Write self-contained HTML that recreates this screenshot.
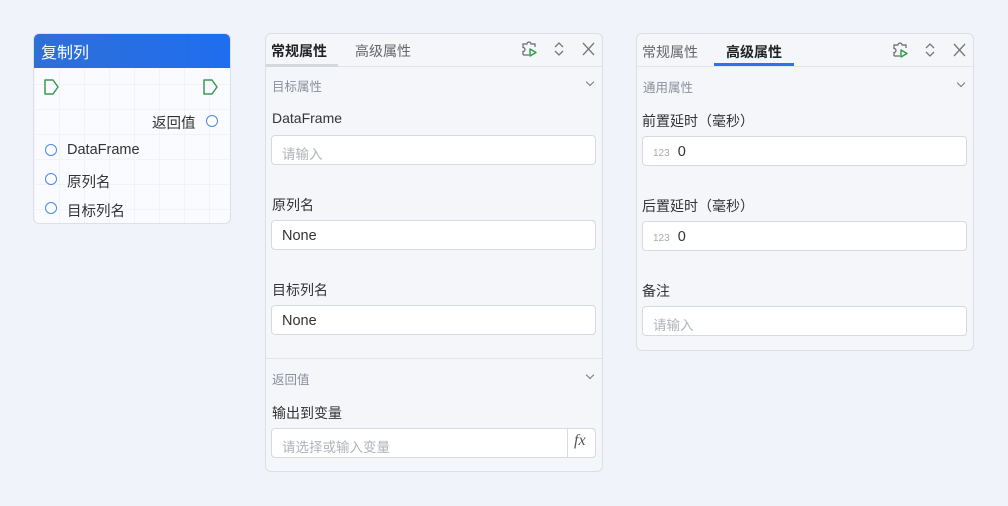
<!DOCTYPE html>
<html><head><meta charset="utf-8"><style>
*{box-sizing:border-box;margin:0;padding:0}
body{width:1008px;height:506px;background:#f0f3fa;font-family:"Liberation Sans","Noto Sans CJK SC",sans-serif;position:relative;overflow:hidden;color:#333}
.a{position:absolute;white-space:nowrap}
.node{position:absolute;left:33px;top:33px;width:198px;height:191px;border:1px solid #dde0e6;border-radius:6px;overflow:hidden;
background-color:#fafbfe;background-image:linear-gradient(#f1f3f8 1px,transparent 1px),linear-gradient(90deg,#f1f3f8 1px,transparent 1px);background-size:25px 25px}
.nh{position:absolute;left:0;top:0;width:100%;height:34px;background:linear-gradient(90deg,#2f6fd6,#1f6ef0);color:#fff;font-size:16px;padding:5px 7px}
.circ{position:absolute;width:12px;height:12px;border:1.3px solid #4a86e8;border-radius:50%;background:#fff}
.nt{position:absolute;font-size:14.5px;color:#333}
.panel{position:absolute;background:#f5f6f9;border:1px solid #dcdfe6;border-radius:6px}
.lbl{position:absolute;font-size:14px;color:#333}
.sec{position:absolute;font-size:12.5px;color:#8a8f99}
.inp{position:absolute;height:30px;background:#fff;border:1px solid #d5d9e0;border-radius:4px;font-size:14.5px;padding:7px 10px 5px;color:#333}
.ph{color:#b0b3ba;font-size:13.5px}
.chev{position:absolute;width:6px;height:6px;border-right:1.5px solid #777;border-bottom:1.5px solid #777;transform:rotate(45deg)}
</style></head><body>

<div class="node">
  <div class="nh">复制列</div>
  <svg class="a" style="left:9px;top:44px" width="18" height="18"><path d="M2 2h8l5 7-5 7H2z" fill="none" stroke="#3a9a4f" stroke-width="1.5" stroke-linejoin="round"/></svg>
  <svg class="a" style="left:168px;top:44px" width="18" height="18"><path d="M2 2h8l5 7-5 7H2z" fill="none" stroke="#3a9a4f" stroke-width="1.5" stroke-linejoin="round"/></svg>
  <div class="nt" style="left:118px;top:78px">返回值</div>
  <div class="circ" style="left:172px;top:81px"></div>
  <div class="circ" style="left:11px;top:110px"></div><div class="nt" style="left:33px;top:108px">DataFrame</div>
  <div class="circ" style="left:11px;top:139px"></div><div class="nt" style="left:33px;top:137px">原列名</div>
  <div class="circ" style="left:11px;top:168px"></div><div class="nt" style="left:33px;top:166px">目标列名</div>
</div>

<!-- panel 1 -->
<div class="panel" style="left:265px;top:33px;width:338px;height:439px">
  <div class="a" style="left:0;top:32px;width:336px;border-top:1px solid #e3e5ea"></div>
  <div class="a" style="left:0;top:30px;width:72px;height:3px;background:#d5d8de"></div>
  <div class="a" style="left:5px;top:7px;font-size:14px;font-weight:bold;color:#222">常规属性</div>
  <div class="a" style="left:89px;top:7px;font-size:14px;color:#666">高级属性</div>
  <div class="a" style="left:0;top:324px;width:336px;border-top:1px solid #e3e5ea"></div>
</div>
<!-- panel 2 -->
<div class="panel" style="left:636px;top:33px;width:338px;height:318px">
  <div class="a" style="left:0;top:32px;width:336px;border-top:1px solid #e3e5ea"></div>
  <div class="a" style="left:77px;top:29px;width:80px;height:3px;background:#2f6ff0"></div>
  <div class="a" style="left:5px;top:8px;font-size:14px;color:#666">常规属性</div>
  <div class="a" style="left:89px;top:8px;font-size:14px;font-weight:bold;color:#222">高级属性</div>
</div>

<!-- header icons -->
<svg class="a" style="left:520px;top:39px" width="80" height="20">
 <path d="M3 16V12.5a2 2 0 0 0 0-4V5h4a2 2 0 0 1 4 0h4v3" fill="none" stroke="#666" stroke-width="1.2"/><path d="M3 16h6" stroke="#666" stroke-width="1.2"/>
 <path d="M10 10v7l6-3.5z" fill="none" stroke="#2e9a4a" stroke-width="1.4" stroke-linejoin="round"/>
 <path d="M35 8l4-4 4 4M35 12l4 4 4-4" fill="none" stroke="#777" stroke-width="1.3"/>
 <path d="M63 4l11 12M74 4L63 16" stroke="#777" stroke-width="1.3"/>
</svg>
<svg class="a" style="left:891px;top:40px" width="80" height="20">
 <path d="M3 16V12.5a2 2 0 0 0 0-4V5h4a2 2 0 0 1 4 0h4v3" fill="none" stroke="#666" stroke-width="1.2"/><path d="M3 16h6" stroke="#666" stroke-width="1.2"/>
 <path d="M10 10v7l6-3.5z" fill="none" stroke="#2e9a4a" stroke-width="1.4" stroke-linejoin="round"/>
 <path d="M35 8l4-4 4 4M35 12l4 4 4-4" fill="none" stroke="#777" stroke-width="1.3"/>
 <path d="M63 4l11 12M74 4L63 16" stroke="#777" stroke-width="1.3"/>
</svg>

<!-- panel1 contents -->
<div class="sec" style="left:272px;top:76px">目标属性</div><div class="chev" style="left:587px;top:79px"></div>
<div class="lbl" style="left:272px;top:110px">DataFrame</div>
<div class="inp" style="left:271px;top:135px;width:325px"><span class="ph">请输入</span></div>
<div class="lbl" style="left:272px;top:195px">原列名</div>
<div class="inp" style="left:271px;top:220px;width:325px">None</div>
<div class="lbl" style="left:272px;top:280px">目标列名</div>
<div class="inp" style="left:271px;top:305px;width:325px">None</div>
<div class="sec" style="left:272px;top:369px">返回值</div><div class="chev" style="left:587px;top:372px"></div>
<div class="lbl" style="left:272px;top:403px">输出到变量</div>
<div class="inp" style="left:271px;top:428px;width:325px"><span class="ph">请选择或输入变量</span></div>
<div class="a" style="left:567px;top:429px;height:28px;border-left:1px solid #d5d9e0"></div>
<div class="a" style="left:574px;top:432px;font-family:'Liberation Serif',serif;font-style:italic;font-size:16px;color:#555">fx</div>

<!-- panel2 contents -->
<div class="sec" style="left:643px;top:77px">通用属性</div><div class="chev" style="left:958px;top:80px"></div>
<div class="lbl" style="left:642px;top:111px">前置延时（毫秒）</div>
<div class="inp" style="left:642px;top:136px;width:325px"><span style="font-size:10px;color:#aaa;margin-right:8px">123</span>0</div>
<div class="lbl" style="left:642px;top:196px">后置延时（毫秒）</div>
<div class="inp" style="left:642px;top:221px;width:325px"><span style="font-size:10px;color:#aaa;margin-right:8px">123</span>0</div>
<div class="lbl" style="left:642px;top:281px">备注</div>
<div class="inp" style="left:642px;top:306px;width:325px"><span class="ph">请输入</span></div>
</body></html>
